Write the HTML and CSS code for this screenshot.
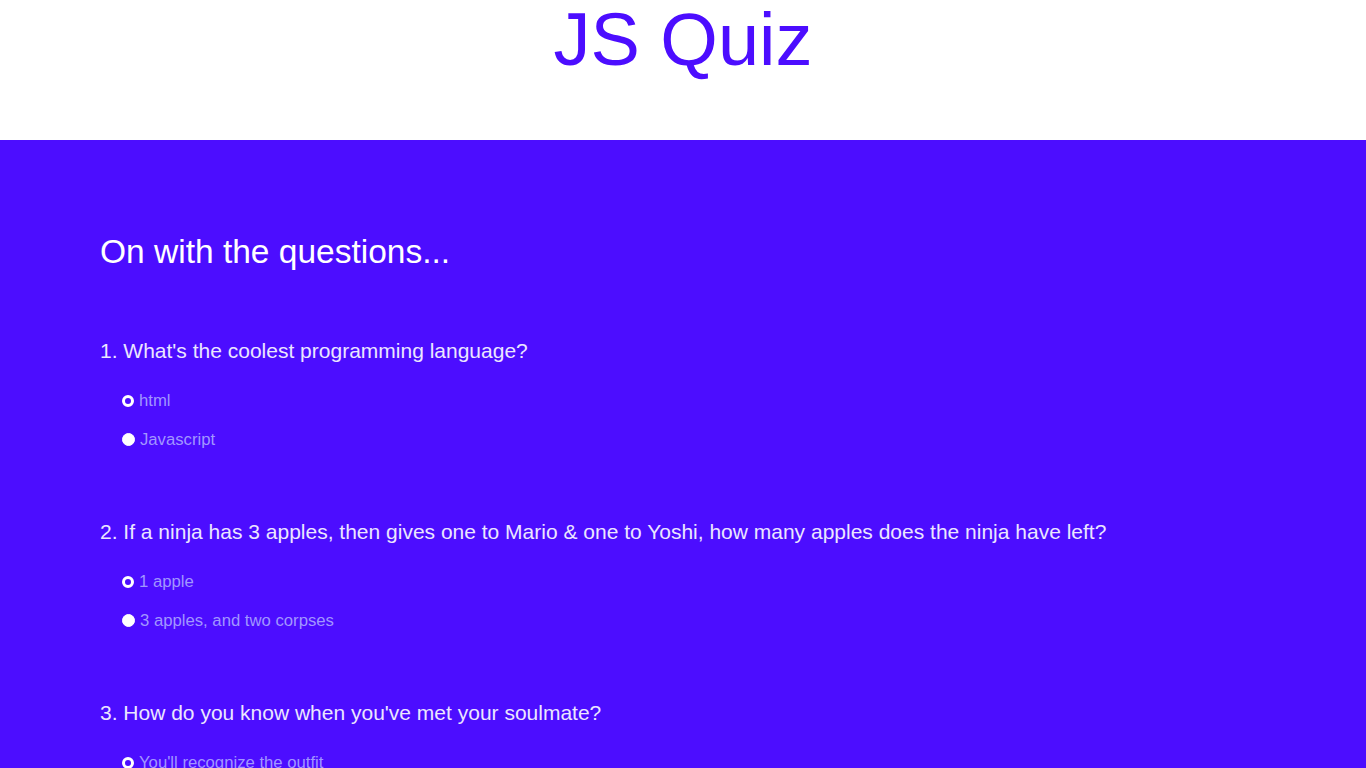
FILE: index.html
```html
<!DOCTYPE html>
<html lang="en">
<head>
<meta charset="utf-8">
<title>JS Quiz</title>
<link rel="stylesheet" href="styles.css">
</head>
<body>
<header class="title-bar">
  <h1 class="title">JS Quiz</h1>
</header>
<main class="quiz">
  <h2 class="quiz-heading">On with the questions...</h2>
  <div class="question">
    <p class="question-text">1. What's the coolest programming language?</p>
    <label class="option"><span class="radio"></span>html</label>
    <label class="option"><span class="radio checked"></span>Javascript</label>
  </div>
  <div class="question">
    <p class="question-text">2. If a ninja has 3 apples, then gives one to Mario &amp; one to Yoshi, how many apples does the ninja have left?</p>
    <label class="option"><span class="radio"></span>1 apple</label>
    <label class="option"><span class="radio checked"></span>3 apples, and two corpses</label>
  </div>
  <div class="question">
    <p class="question-text">3. How do you know when you've met your soulmate?</p>
    <label class="option"><span class="radio"></span>You'll recognize the outfit</label>
    <label class="option"><span class="radio checked"></span>You just know</label>
  </div>
</main>
</body>
</html>
```
FILE: styles.css
```css
* { box-sizing: border-box; }
html, body { margin: 0; padding: 0; }
body {
  font-family: "Liberation Sans", Arial, sans-serif;
  background: #4c0dff;
}
.title-bar {
  background: #fff;
  height: 140px;
  display: flex;
  justify-content: center;
}
.title {
  margin: 0;
  font-weight: 400;
  font-size: 74px;
  line-height: 80px;
  color: #4c0dff;
}
.quiz {
  padding: 92px 100px 40px;
  color: #fff;
}
.quiz-heading {
  margin: 0 0 62px;
  font-weight: 400;
  font-size: 33.5px;
  line-height: 40px;
}
.question { margin-bottom: 56px; }
.question-text {
  margin: 0 0 13px;
  font-size: 21px;
  line-height: 34px;
  color: #ebe6ff;
}
.option {
  display: flex;
  align-items: center;
  gap: 5px;
  margin-left: 22px;
  height: 39px;
  font-size: 16.7px;
  color: #a196ff;
}
.radio {
  width: 12px;
  height: 12px;
  border-radius: 50%;
  border: 3px solid #fff;
}
.radio.checked { width: 13px; height: 13px; background: #fff; border-width: 1px; }
```
